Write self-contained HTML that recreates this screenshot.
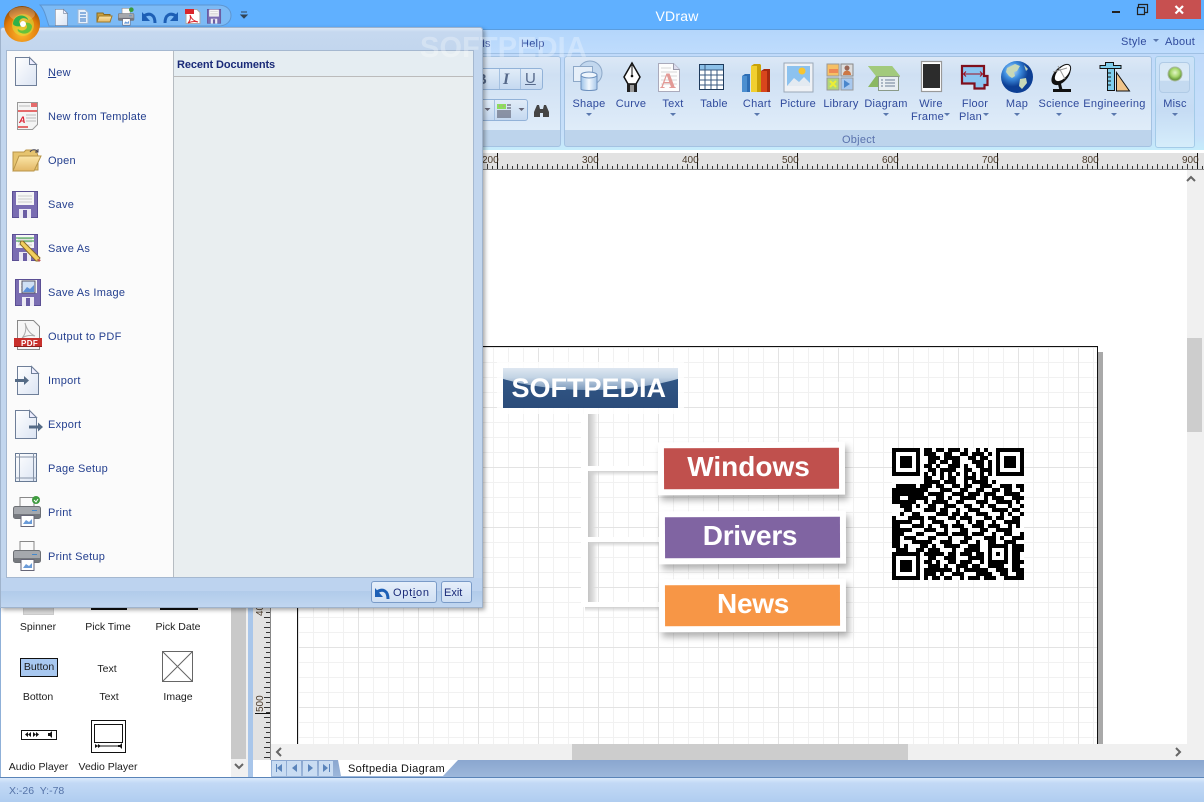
<!DOCTYPE html>
<html><head><meta charset="utf-8"><title>VDraw</title>
<style>
html,body{margin:0;padding:0;width:1204px;height:802px;overflow:hidden;background:#fff;font-family:"Liberation Sans",sans-serif}
div{position:absolute;box-sizing:border-box}
.t{position:absolute;white-space:nowrap;font-size:11px;line-height:14px;letter-spacing:.25px}
.c{transform:translateX(-50%)}
.r{color:#2f4a9c}
.m{color:#25408f;left:48px;letter-spacing:.25px}
.p{color:#1c1c1c;font-size:10.5px;letter-spacing:0}
svg{position:absolute;left:0;top:0;overflow:visible}
.rl{font:10px "Liberation Sans",sans-serif;fill:#4a3a2a}
</style></head><body>
<!-- title bar -->
<div style="left:0;top:0;width:1204px;height:30px;background:#60b0ff;border-bottom:1px solid #5a9ddf"></div>
<div class="t c" style="left:677px;top:8px;color:#fff;font-size:14px;line-height:17px;letter-spacing:.2px">VDraw</div>
<div style="left:1156px;top:0;width:45px;height:19px;background:#c75050"></div>
<svg width="1204" height="802" style="z-index:2">
<rect x="1112" y="11" width="8" height="2" fill="#222"/>
<path d="M1138.500 7.500v-3h9v8h-3M1137.500 7.500h7v7h-7z" fill="none" stroke="#222" stroke-width="1.200"/>
<path d="M1175.500 6l7.500 7.500M1183 6l-7.500 7.500" stroke="#fff" stroke-width="2.200"/>
</svg>
<!-- menu bar + ribbon -->
<div style="left:0;top:30px;width:1204px;height:24px;background:linear-gradient(#b4d6fb,#bfdcfd)"></div>
<div style="left:0;top:53px;width:1204px;height:97px;background:linear-gradient(#c0dafa,#c7e0fa 85%,#c5ecfb);border-top:1px solid #9fc0e4"></div>
<div class="t r" style="left:521px;top:37px">Help</div>
<div class="t r" style="left:476px;top:37px;">ols</div>
<div class="t r" style="left:1121px;top:35px">Style</div>
<div class="t r" style="left:1165px;top:35px">About</div>
<div style="left:300px;top:56px;width:261px;height:91px;border:1px solid #a4c2e2;border-radius:3px;background:linear-gradient(#dce8f6,#d2e2f4 16%,#cfe0f3 20%,#dfecf9 82%,#bdd4ec 82%,#bdd4ec)"></div>
<div style="left:564px;top:56px;width:588px;height:91px;border:1px solid #a4c2e2;border-radius:3px;background:linear-gradient(#dce8f6,#d2e2f4 16%,#cfe0f3 20%,#dfecf9 82%,#bdd4ec 82%,#bdd4ec)"></div>
<div style="left:1155px;top:56px;width:40px;height:92px;border:1px solid #a4cbe8;border-radius:3px;background:linear-gradient(#cbe2f8,#c6dcf4 60%,#d5edfb)"></div>
<div style="left:1159px;top:62px;width:31px;height:31px;border:1px solid #b0cbe6;border-radius:4px;background:linear-gradient(#d8e8f6,#dcebf8 60%,#c4daf0 62%,#c4daf0)"></div>
<div class="t" style="left:842px;top:133px;color:#5a72ad">Object</div>
<div style="left:470px;top:68px;width:73px;height:22px;border:1px solid #92b2d8;border-radius:3px;background:linear-gradient(#e1ecf8,#c5d9f0)"></div>
<div style="left:520px;top:69px;width:1px;height:20px;background:#a4c0e0"></div>
<div style="left:499px;top:69px;width:1px;height:20px;background:#a4c0e0"></div>
<div style="left:470px;top:99px;width:58px;height:22px;border:1px solid #92b2d8;border-radius:3px;background:linear-gradient(#e1ecf8,#c5d9f0)"></div>
<div style="left:494px;top:100px;width:1px;height:20px;background:#a4c0e0"></div>
<div class="t" style="left:476px;top:71px;color:#56698a;font-weight:bold;font-size:15px;line-height:17px;letter-spacing:0">B</div>
<div class="t" style="left:503px;top:71px;color:#56698a;font:bold italic 16px/17px 'Liberation Serif',serif;letter-spacing:0">I</div>
<div class="t" style="left:525px;top:70px;color:#56698a;font-size:15px;line-height:17px;letter-spacing:0;text-decoration:underline">U</div>
<!-- ruler top -->
<div style="left:0;top:153px;width:1187px;height:17px;background:#e2e2e2;border-bottom:1px solid #888"></div>
<div style="left:1187px;top:153px;width:17px;height:17px;background:#e2e2e2;border-bottom:1px solid #888"></div>
<svg width="1204" height="802">
<defs>
<pattern id="tk" x="397" y="153" width="10" height="17" patternUnits="userSpaceOnUse"><rect x="0" y="11" width="1" height="5" fill="#333"/><rect x="5" y="13" width="1" height="3" fill="#333"/></pattern>
<pattern id="tv" x="253" y="607" width="18" height="10" patternUnits="userSpaceOnUse"><rect x="11" y="0" width="6" height="1" fill="#333"/><rect x="13" y="5" width="4" height="1" fill="#333"/></pattern>
</defs>
<rect x="482" y="153" width="722" height="16" fill="url(#tk)"/>
<g fill="#111"><rect x="497" y="153" width="1" height="16"/><rect x="597" y="153" width="1" height="16"/><rect x="697" y="153" width="1" height="16"/><rect x="797" y="153" width="1" height="16"/><rect x="897" y="153" width="1" height="16"/><rect x="997" y="153" width="1" height="16"/><rect x="1097" y="153" width="1" height="16"/><rect x="1197" y="153" width="1" height="16"/></g>
<g class="rl"><text x="482" y="163">200</text><text x="582" y="163">300</text><text x="682" y="163">400</text><text x="782" y="163">500</text><text x="882" y="163">600</text><text x="982" y="163">700</text><text x="1082" y="163">800</text><text x="1182" y="163">900</text></g>
</svg>
<!-- right scrollbar -->
<div style="left:1187px;top:170px;width:17px;height:590px;background:#f0f0f0"></div>
<div style="left:1187px;top:338px;width:15px;height:94px;background:#cdcdcd"></div>
<!-- page -->
<div style="left:1098px;top:352px;width:5px;height:392px;background:#a9a9a9"></div>
<div style="left:297px;top:346px;width:801px;height:398px;border:1px solid #111;border-bottom:0;background-color:#fff;background-image:linear-gradient(#e3e3e3 1px,transparent 1px),linear-gradient(90deg,#e3e3e3 1px,transparent 1px),linear-gradient(#f1f1f1 1px,transparent 1px),linear-gradient(90deg,#f1f1f1 1px,transparent 1px);background-size:60px 60px,60px 60px,15px 15px,15px 15px;background-position:0 0"></div>
<!-- diagram -->
<div style="left:588px;top:414px;width:10px;height:190px;background:linear-gradient(90deg,#c4c4c4,#dcdcdc 50%,rgba(230,230,230,0))"></div>
<div style="left:589px;top:471px;width:70px;height:5px;background:linear-gradient(#cfcfcf,rgba(230,230,230,0))"></div>
<div style="left:589px;top:542px;width:70px;height:5px;background:linear-gradient(#cfcfcf,rgba(230,230,230,0))"></div>
<div style="left:585px;top:607px;width:74px;height:5px;background:linear-gradient(#cfcfcf,rgba(230,230,230,0))"></div>
<div style="left:581px;top:414px;width:7px;height:193px;background:#fff"></div>
<div style="left:587px;top:466px;width:73px;height:5px;background:#fff"></div>
<div style="left:587px;top:537px;width:73px;height:5px;background:#fff"></div>
<div style="left:581px;top:602px;width:79px;height:5px;background:#fff"></div>
<div style="left:497px;top:362px;width:187px;height:52px;background:rgba(255,255,255,.8)"></div>
<div style="left:503px;top:368px;width:175px;height:40px;overflow:hidden;background:linear-gradient(#335a8a,#2b4c7a)"><div style="left:-40px;top:-60px;width:255px;height:82px;border-radius:50%;background:linear-gradient(#e6edf5 70%,#c2d3e4 85%,#7d9abb)"></div></div>
<div class="t" style="left:511.500px;top:372px;color:#fff;font-weight:bold;font-size:27px;line-height:32px;letter-spacing:0">SOFTPEDIA</div>
<div style="left:658px;top:442px;width:187px;height:53px;background:#fff;box-shadow:3px 5px 7px rgba(0,0,0,.3);transform:rotate(-.2deg)"></div>
<div style="left:664px;top:448px;width:175px;height:41px;background:#c0504d;transform:rotate(-.2deg)"></div>
<div class="t c" style="left:748.500px;top:451px;color:#fff;font-weight:bold;font-size:28px;line-height:32px;letter-spacing:0">Windows</div>
<div style="left:659px;top:511px;width:187px;height:53px;background:#fff;box-shadow:3px 5px 7px rgba(0,0,0,.3);transform:rotate(-.2deg)"></div>
<div style="left:665px;top:517px;width:175px;height:41px;background:#8064a2;transform:rotate(-.2deg)"></div>
<div class="t c" style="left:750px;top:520px;color:#fff;font-weight:bold;font-size:28px;line-height:32px;letter-spacing:-.3px">Drivers</div>
<div style="left:659px;top:579px;width:187px;height:53px;background:#fff;box-shadow:3px 5px 7px rgba(0,0,0,.3);transform:rotate(-.2deg)"></div>
<div style="left:665px;top:585px;width:175px;height:41px;background:#f79646;transform:rotate(-.2deg)"></div>
<div class="t c" style="left:753px;top:588px;color:#fff;font-weight:bold;font-size:28px;line-height:32px;letter-spacing:-.3px">News</div>
<!-- QR -->
<svg width="132" height="132" viewBox="0 0 33 33" style="left:892px;top:448px;background:#fff;overflow:hidden" shape-rendering="crispEdges">
<path fill-rule="evenodd" d="M0 0h7v7h-7zM1 1v5h5v-5zM2 2h3v3h-3zM26 0h7v7h-7zM27 1v5h5v-5zM28 2h3v3h-3zM0 26h7v7h-7zM1 27v5h5v-5zM2 28h3v3h-3z"/>
<path fill="none" stroke="#000" d="M8 .5h2M11 .5h2M14 .5h3M18 .5h1M21 .5h1M23 .5h1M8 1.500h3M13 1.500h2M17 1.500h2M20 1.500h3M24 1.500h1M9 2.500h3M13 2.500h4M19 2.500h2M22 2.500h2M9 3.500h2M12 3.500h2M15 3.500h2M20 3.500h3M24 3.500h1M8 4.500h2M11 4.500h1M14 4.500h3M18 4.500h1M21 4.500h2M24 4.500h1M9 5.500h2M12 5.500h4M18 5.500h2M22 5.500h3M8 6.500h1M10 6.500h1M12 6.500h1M14 6.500h1M16 6.500h1M18 6.500h1M20 6.500h1M22 6.500h1M24 6.500h1M8 7.500h2M12 7.500h1M14 7.500h2M18 7.500h3M22 7.500h2M8 8.500h4M13 8.500h3M18 8.500h1M20 8.500h4M25 8.500h1M1 9.500h5M7 9.500h3M11 9.500h2M15 9.500h2M18 9.500h2M22 9.500h3M27 9.500h3M31 9.500h2M0 10.500h9M12 10.500h3M17 10.500h2M21 10.500h2M25 10.500h2M28 10.500h2M32 10.500h1M0 11.500h8M9 11.500h4M15 11.500h3M19 11.500h3M23 11.500h3M28 11.500h4M0 12.500h2M4 12.500h5M11 12.500h2M14 12.500h1M17 12.500h4M23 12.500h1M25 12.500h3M30 12.500h3M0 13.500h6M8 13.500h1M10 13.500h4M16 13.500h2M21 13.500h3M26 13.500h4M31 13.500h1M2 14.500h3M6 14.500h1M9 14.500h2M13 14.500h3M18 14.500h2M22 14.500h1M24 14.500h2M29 14.500h1M32 14.500h1M3 15.500h2M8 15.500h3M12 15.500h2M16 15.500h1M19 15.500h3M25 15.500h4M30 15.500h2M2 16.500h1M5 16.500h2M11 16.500h3M15 16.500h2M18 16.500h1M21 16.500h3M27 16.500h1M29 16.500h1M32 16.500h1M0 17.500h1M4 17.500h4M9 17.500h2M14 17.500h2M17 17.500h3M23 17.500h2M26 17.500h2M30 17.500h2M0 18.500h5M7 18.500h1M10 18.500h3M16 18.500h1M19 18.500h1M21 18.500h2M25 18.500h1M28 18.500h4M0 19.500h2M5 19.500h3M9 19.500h1M12 19.500h2M15 19.500h3M20 19.500h3M24 19.500h3M29 19.500h1M31 19.500h1M0 20.500h5M8 20.500h3M13 20.500h1M17 20.500h2M22 20.500h2M26 20.500h4M0 21.500h3M6 21.500h2M11 21.500h3M15 21.500h4M20 21.500h3M25 21.500h1M28 21.500h2M32 21.500h1M0 22.500h2M3 22.500h3M9 22.500h2M14 22.500h1M18 22.500h2M23 22.500h3M27 22.500h1M30 22.500h3M0 23.500h2M5 23.500h5M12 23.500h3M17 23.500h2M21 23.500h1M24 23.500h2M28 23.500h3M0 24.500h2M3 24.500h1M7 24.500h2M10 24.500h1M13 24.500h4M19 24.500h3M30 24.500h3M1 25.500h3M6 25.500h2M9 25.500h3M15 25.500h1M18 25.500h4M30 25.500h3M8 26.500h5M14 26.500h2M17 26.500h3M21 26.500h2M30 26.500h2M9 27.500h2M13 27.500h3M19 27.500h4M30 27.500h2M8 28.500h2M11 28.500h1M14 28.500h2M17 28.500h3M22 28.500h1M30 28.500h3M9 29.500h3M13 29.500h1M16 29.500h3M20 29.500h2M24 29.500h4M30 29.500h2M8 30.500h7M16 30.500h1M18 30.500h6M26 30.500h3M30 30.500h3M8 31.500h3M12 31.500h1M15 31.500h3M21 31.500h4M27 31.500h2M31 31.500h2M8 32.500h1M10 32.500h2M13 32.500h2M17 32.500h1M19 32.500h3M23 32.500h3M28 32.500h5"/>
<path fill-rule="evenodd" d="M24 24h5v5h-5zM25 25v3h3v-3zM26 26h1v1h-1z"/>
</svg>
<!-- left ruler & panel -->
<div style="left:248px;top:600px;width:5px;height:178px;background:#a9c6ea"></div>
<div style="left:253px;top:600px;width:18px;height:160px;background:#e2e2e2;border-right:1px solid #888"></div>
<svg width="1204" height="802"><rect x="253" y="607" width="18" height="153" fill="url(#tv)"/>
<rect x="255" y="607" width="15" height="1" fill="#111"/><rect x="255" y="713" width="15" height="1" fill="#111"/>
<text transform="translate(263,712) rotate(-90)" class="rl" fill="#222">500</text>
<text transform="translate(263,616) rotate(-90)" class="rl" fill="#222">40</text>
</svg>
<div style="left:0;top:600px;width:248px;height:178px;background:#fff;border-left:1px solid #8fb0d8"></div>
<div style="left:231px;top:600px;width:17px;height:177px;background:#f0f0f0"></div>
<div style="left:231px;top:600px;width:15px;height:159px;background:#c9c9c9"></div>
<div style="left:23px;top:607px;width:31px;height:8px;background:#d9d9d9;border:1px solid #ccc;border-top:0"></div>
<div style="left:91px;top:607px;width:36px;height:3px;background:#111"></div>
<div style="left:160px;top:607px;width:38px;height:3px;background:#111"></div>
<div class="t c p" style="left:38px;top:620px">Spinner</div>
<div class="t c p" style="left:108px;top:620px">Pick Time</div>
<div class="t c p" style="left:178px;top:620px">Pick Date</div>
<div class="t c p" style="left:39px;top:658px;width:38px;height:19px;background:#a8c8f0;border:1px solid #111;line-height:17px;text-align:center">Button</div>
<div class="t c p" style="left:107px;top:662px">Text</div>
<div class="t c p" style="left:38px;top:690px">Botton</div>
<div class="t c p" style="left:109px;top:690px">Text</div>
<div class="t c p" style="left:178px;top:690px">Image</div>
<div class="t c p" style="left:38.500px;top:760px">Audio Player</div>
<div class="t c p" style="left:108px;top:760px">Vedio Player</div>
<svg width="1204" height="802">
<path d="M162.500 651.500h30v30h-30zM163 652l29 29M192 652l-29 29" fill="#fff" stroke="#666"/>
<rect x="21.500" y="730.500" width="35" height="9" fill="#fff" stroke="#111"/>
<path d="M28 732v5l-3-2.500zM31 732v5l-3-2.500zM33 732v5l3-2.500zM36 732v5l3-2.500zM48 733h2l2-2v7l-2-2h-2z" fill="#111"/>
<rect x="91.500" y="720.500" width="34" height="32" fill="#fff" stroke="#111"/>
<rect x="94.500" y="724.500" width="28" height="18" fill="#fff" stroke="#111"/>
<path d="M96 746h22" stroke="#111"/><path d="M95 744v4l3-2zM98 744v4l3-2zM118 745h2l2-2v6l-2-2h-2z" fill="#111"/>
<path d="M235 764l4 4 4-4" fill="none" stroke="#666" stroke-width="2"/>
</svg>
<!-- scroll h + tabs -->
<div style="left:271px;top:744px;width:916px;height:16px;background:#f0f0f0"></div>
<div style="left:572px;top:744px;width:336px;height:16px;background:#cdcdcd"></div>
<div style="left:271px;top:760px;width:933px;height:17px;background:linear-gradient(#8aa6cf,#9db7db)"></div>
<div style="left:0;top:777px;width:1204px;height:25px;background:linear-gradient(#5a84b8 0,#5a84b8 1px,#dbeafc 1px,#c3d9f5 6px,#b0cdf0)"></div>
<div class="t" style="left:9px;top:784px;color:#5573a8;font-size:10.5px;letter-spacing:0">X:-26&nbsp; Y:-78</div>
<svg width="1204" height="802">
<g fill="#c9dcf2"><rect x="272" y="761" width="14" height="15"/><rect x="287" y="761" width="14" height="15"/><rect x="303" y="761" width="14" height="15"/><rect x="319" y="761" width="14" height="15"/></g>
<g fill="#5a84bb"><path d="M276 764v8h1v-8zM282 764v8l-5-4zM297 764v8l-5-4zM308 764v8l5-4zM323 764v8l5-4zM329 764v8h1v-8z"/></g>
<path d="M338 760H458L443 776H341z" fill="#fff"/>
<path d="M1187 181l4-4 4 4" fill="none" stroke="#666" stroke-width="2"/>
<path d="M281 748l-4 4 4 4" fill="none" stroke="#666" stroke-width="2"/>
<path d="M1176 748l4 4-4 4" fill="none" stroke="#666" stroke-width="2"/>
</svg>
<div class="t" style="left:348px;top:762px;color:#111;letter-spacing:.35px">Softpedia Diagram</div>
<!-- ribbon icons -->
<svg width="1204" height="802">
<defs>
<linearGradient id="gb" x1="0" x2="1"><stop offset="0" stop-color="#9cc2e8"/><stop offset=".5" stop-color="#f2f8fe"/><stop offset="1" stop-color="#a8c8ea"/></linearGradient>
<linearGradient id="gv" x1="0" y1="0" x2="0" y2="1"><stop offset="0" stop-color="#fff"/><stop offset="1" stop-color="#c4d3ea"/></linearGradient>
<radialGradient id="glb" cx=".35" cy=".3"><stop offset="0" stop-color="#cfe6fb"/><stop offset=".5" stop-color="#3e8ee0"/><stop offset="1" stop-color="#0d3f94"/></radialGradient>
<radialGradient id="gre" cx=".5" cy=".4"><stop offset="0" stop-color="#e2f5c8"/><stop offset=".6" stop-color="#a8d86e"/><stop offset="1" stop-color="#6c9e40"/></radialGradient>
</defs>
<!-- toolbar row 2 -->
<path d="M484.500 108l3 3 3-3zM518.500 108l3 3 3-3z" fill="#667"/>
<rect x="497" y="104" width="9" height="5" fill="#8ddc5e"/><path d="M499 106h1M503 106h1" stroke="#e060c0"/>
<path d="M507 105h4M507 108h4M497 111h14M497 113h14M497 115h14M497 117h14" stroke="#445"/>
<path d="M534 117v-5l3-7h2l1 4h3l1-4h2l3 7v5h-6v-4h-3v4z" fill="#444"/>
<!-- shape -->
<circle cx="590" cy="73" r="12" fill="#c2d7ee" stroke="#8da8c8"/>
<rect x="573.500" y="66.500" width="19" height="15" fill="#e6eff9" stroke="#8da8c8"/>
<path d="M581 75v14c0 2 16 2 16 0v-14z" fill="url(#gb)" stroke="#6d90bd"/>
<ellipse cx="589" cy="75" rx="8" ry="3" fill="#eef5fc" stroke="#6d90bd"/>
<!-- pen -->
<path d="M632 63l-8 14 4 7h8l4-7z" fill="#fff" stroke="#111" stroke-width="1.500"/>
<path d="M632 65v10" stroke="#111"/><circle cx="632" cy="76" r="1.300" fill="#111"/>
<rect x="627" y="84" width="10" height="8" fill="#222"/><rect x="630" y="85" width="4" height="7" fill="#999"/>
<!-- text doc -->
<path d="M658.500 63.500h15l6 6v22h-21z" fill="#fdfdfd" stroke="#aab"/>
<path d="M673.500 63.500v6h6" fill="#dde" stroke="#99a"/>
<path d="M661 68h10M661 72h16M661 76h16M661 80h16M661 84h16" stroke="#d8d8d8"/>
<text x="660" y="88" font-family="Liberation Serif" font-weight="bold" font-size="22" fill="#e39a96">A</text>
<!-- table -->
<rect x="699.500" y="64.500" width="24" height="25" fill="#fff" stroke="#1e3a5c" stroke-width="1"/>
<rect x="700" y="65" width="23" height="5" fill="#8cc0e8"/>
<path d="M700 70h23M700 75h23M700 80h23M700 85h23M705 65v24M711 70v19M717 70v19" stroke="#3a5a80" fill="none"/>
<!-- chart -->
<path d="M742 76l3-2h5v18h-8z" fill="#2e6eb5"/><rect x="742" y="76" width="5" height="16" fill="#4c8fd0"/>
<path d="M751 66l3-2h6l1 1v27h-10z" fill="#c9a208"/><rect x="751" y="66" width="6" height="26" fill="#f1cf2f"/>
<path d="M761 71l3-2h6v23h-9z" fill="#a52a10"/><rect x="761" y="71" width="6" height="21" fill="#d9461c"/>
<!-- picture -->
<rect x="784" y="63" width="29" height="29" fill="#eef1f5" stroke="#9aa8b8"/>
<rect x="787" y="66" width="23" height="20" fill="#8cc2ef"/>
<circle cx="802" cy="71" r="3.500" fill="#f7c531"/>
<path d="M787 86l7-8 5 4 5-5 6 6v3z" fill="#e3eaf1"/>
<!-- library -->
<rect x="827" y="64" width="12" height="12" fill="#f6c065" stroke="#999"/><rect x="829" y="69" width="9" height="4" fill="#e85"/>
<rect x="841" y="64" width="12" height="12" fill="#ddd" stroke="#888"/><circle cx="847" cy="68" r="2.500" fill="#965"/><path d="M843 75c0-6 8-6 8 0z" fill="#c74"/>
<rect x="827" y="78" width="12" height="12" fill="#b2d67a" stroke="#999"/><path d="M830 81l6 6M836 81l-6 6" stroke="#ee3" stroke-width="2"/>
<rect x="841" y="78" width="12" height="12" fill="#a8c8ee" stroke="#999"/><path d="M844 80v8l6-4z" fill="#4a86cc"/>
<!-- diagram -->
<path d="M868 66h24l8 10-8 11h-24l8-11z" fill="#8bb862"/><path d="M868 66h24l8 10h-24z" fill="#a2ca7c"/>
<rect x="878.500" y="76.500" width="20" height="14" fill="#e8eef2" stroke="#8a9a88"/>
<path d="M881 80h2M885 80h10M881 83h2M885 83h10M881 86h2M885 86h10" stroke="#6d7f96"/>
<!-- wire -->
<rect x="921.500" y="61.500" width="20" height="30" fill="#fff" stroke="#999" stroke-width="1.200"/>
<rect x="923" y="64" width="17" height="24" fill="#2c2c2c"/>
<!-- floor -->
<path d="M962 66h22v10h3.500v9h-3v3.500h-10v-5h-12.500z" fill="#8ac4f0" stroke="#7f0f1c" stroke-width="2.200"/>
<path d="M964 74h18M966 71.500l-2.500 2.500 2.500 2.500M980 71.500l2.500 2.500-2.500 2.500" fill="none" stroke="#a01020"/>
<!-- globe -->
<circle cx="1017" cy="77" r="16" fill="url(#glb)"/>
<path d="M1007 68l8-4 5 2-3 5-3 1 1 4-3 2-3-2-3-4zM1020 79l6-1 1 5-5 6-3-3zM1024 65l4 4-2 2z" fill="#c8d8b8"/>
<!-- science -->
<ellipse cx="1061" cy="75" rx="12" ry="7" transform="rotate(-48 1061 75)" fill="#111"/>
<ellipse cx="1062.500" cy="73" rx="10.500" ry="5.500" transform="rotate(-48 1062.500 73)" fill="#fff" stroke="#111"/>
<path d="M1058 66l7 13M1053 72l14-4" stroke="#999" fill="none"/>
<path d="M1059 82l2 8" stroke="#111" stroke-width="3"/>
<rect x="1053" y="89" width="18" height="3" fill="#111"/>
<!-- engineering -->
<path d="M1105.500 65.500v-3h8v3h7.500v3h-21v-3z" fill="#7fcdec" stroke="#111"/>
<rect x="1107.500" y="68.500" width="7" height="22" fill="#7fcdec" stroke="#111"/>
<path d="M1108 73h3M1108 77h3M1108 81h3M1108 85h3" stroke="#111"/>
<path d="M1116.500 72.500l13 18.500h-13z" fill="#f0c48a" stroke="#111"/>
<!-- misc -->
<circle cx="1175" cy="74" r="7" fill="url(#gre)" stroke="#a8b8a0"/>
<!-- arrows -->
<g fill="#5a78ae"><path d="M586 113h6l-3 3zM670 113h6l-3 3zM754 113h6l-3 3zM883 113h6l-3 3zM944 113h6l-3 3zM983 113h6l-3 3zM1014 113h6l-3 3zM1056 113h6l-3 3zM1111 113h6l-3 3zM1172 113h6l-3 3zM1153 39h6l-3 3z"/></g>
</svg>
<div class="t c r" style="left:589px;top:97px">Shape</div>
<div class="t c r" style="left:631px;top:97px">Curve</div>
<div class="t c r" style="left:673px;top:97px">Text</div>
<div class="t c r" style="left:714px;top:97px">Table</div>
<div class="t c r" style="left:757px;top:97px">Chart</div>
<div class="t c r" style="left:798px;top:97px">Picture</div>
<div class="t c r" style="left:841px;top:97px">Library</div>
<div class="t c r" style="left:886px;top:97px">Diagram</div>
<div class="t c r" style="left:931px;top:97px">Wire</div>
<div class="t r" style="left:911px;top:110px">Frame</div>
<div class="t c r" style="left:975px;top:97px">Floor</div>
<div class="t r" style="left:959px;top:110px">Plan</div>
<div class="t c r" style="left:1017px;top:97px">Map</div>
<div class="t c r" style="left:1059px;top:97px">Science</div>
<div class="t c r" style="left:1114.500px;top:97px;letter-spacing:.35px">Engineering</div>
<div class="t c r" style="left:1175px;top:97px">Misc</div>
<!-- menu -->
<div style="left:0;top:27px;width:483px;height:581px;border:1px solid #9fb3cc;border-radius:3px 3px 0 0;background:linear-gradient(#dbe7f6 0,#c6d8ef 4px,#c2d6ee 24px);box-shadow:2px 2px 4px rgba(0,0,0,.35)"></div>
<div style="left:1px;top:578px;width:481px;height:29px;background:linear-gradient(#bdd3ef,#bdd3ef 45%,#b1cbea 45%,#c0d6f0)"></div>
<div style="left:6px;top:50px;width:468px;height:528px;border:1px solid #a5b8d0;background:#e9eef0"></div>
<div style="left:7px;top:51px;width:167px;height:526px;background:#fbfbfb;border-right:1px solid #b6bcc2"></div>
<div style="left:174px;top:51px;width:299px;height:26px;background:#e5edf2;border-bottom:1px solid #bbb"></div>
<div class="t" style="left:177px;top:58px;color:#1a2a78;font-weight:bold;font-size:11px;letter-spacing:-.1px">Recent Documents</div>
<div class="t m" style="top:66px"><u>N</u>ew</div>
<div class="t m" style="top:110px">New from Template</div>
<div class="t m" style="top:154px">Open</div>
<div class="t m" style="top:198px">Save</div>
<div class="t m" style="top:242px">Save As</div>
<div class="t m" style="top:286px">Save As Image</div>
<div class="t m" style="top:330px">Output to PDF</div>
<div class="t m" style="top:374px">Import</div>
<div class="t m" style="top:418px">Export</div>
<div class="t m" style="top:462px">Page Setup</div>
<div class="t m" style="top:506px">Print</div>
<div class="t m" style="top:550px">Print Setup</div>
<div style="left:371px;top:581px;width:66px;height:22px;border:1px solid #7a9bc8;border-radius:3px;background:linear-gradient(#e6effa,#cfdff3)"></div>
<div style="left:441px;top:581px;width:31px;height:22px;border:1px solid #7a9bc8;border-radius:3px;background:linear-gradient(#e6effa,#cfdff3)"></div>
<div class="t" style="left:393px;top:586px;color:#1a2a78;letter-spacing:.7px">Opt<u>i</u>on</div>
<div class="t" style="left:444px;top:586px;color:#1a2a78;letter-spacing:0">Exit</div>
<div class="t" style="left:420px;top:32px;color:rgba(255,255,255,.28);font-weight:bold;font-size:29px;line-height:32px;letter-spacing:.1px">SOFTPEDIA</div>
<svg width="1204" height="802">
<defs>
<linearGradient id="dg" x1="0" y1="0" x2="1" y2="1"><stop offset="0" stop-color="#fff"/><stop offset="1" stop-color="#dbe4f3"/></linearGradient>
<linearGradient id="fld" x1="0" y1="0" x2="0" y2="1"><stop offset="0" stop-color="#fbe6a8"/><stop offset="1" stop-color="#e3b766"/></linearGradient>
<g id="doc"><path d="M.5.500h14l7 7v21H.5z" fill="url(#dg)" stroke="#6f7f99"/><path d="M14.500.500v7h7z" fill="#eef" stroke="#6f7f99"/></g>
<g id="fl"><rect x=".5" y=".5" width="25" height="26" fill="#7a6db2" stroke="#5b4f94"/><rect x="4" y="1" width="18" height="13" fill="#f6f6f6"/><path d="M6 5h14M6 8h14M6 11h14" stroke="#ccc"/><rect x="7" y="18" width="12" height="9" fill="#eceaf4"/><rect x="11" y="19" width="4" height="8" fill="#6a5da4"/></g>
<g id="prn"><rect x="7" y=".5" width="14" height="11" fill="#fafafa" stroke="#888"/><rect x=".5" y="9.500" width="27" height="12" rx="2" fill="#a5a8ad" stroke="#6d7075"/><rect x="1" y="17" width="26" height="4" fill="#76797e"/><rect x="19" y="13" width="5" height="1" fill="#4488cc"/><rect x="8" y="18.500" width="13" height="11" fill="#fff" stroke="#667"/><path d="M10 27l3-4 3 2 3-3v5z" fill="#6a9bd8"/></g>
<g id="und"><path d="M155 23c0-8-5-11-11-7" fill="none" stroke="#1d5fb5" stroke-width="3"/><path d="M142 12v9h8z" fill="#1d5fb5"/></g>
</defs>
<!-- QAT -->
<path d="M40 5H218c9 0 13 5 13 10.500s-4 10.500-13 10.500H49c-3-8-4-16-9-21z" fill="#7cbaf5" stroke="#5d95d0"/>
<use href="#doc" transform="translate(55,9) scale(.58)"/>
<path d="M78 9.500h7l3 3v11H78z" fill="#e8f1fb" stroke="#9cb8d8"/><path d="M80 13h6M80 16h6M80 19h6M80 21h6" stroke="#2a6fc0"/>
<path d="M97 22V13h6l1 1.500h6V22z" fill="#c8a040" stroke="#8a6a20"/><path d="M97 22l2-6h13l-2 6z" fill="url(#fld)" stroke="#a07a28"/>
<g transform="translate(118,8) scale(.58)"><use href="#prn"/><circle cx="23" cy="3" r="4" fill="#3a9a3a"/></g>
<use href="#und"/>
<use href="#und" transform="matrix(-1 0 0 1 320 0)"/>
<path d="M186 9.500h11l3 3v11h-14z" fill="#fff" stroke="#aaa"/><rect x="185" y="9" width="9" height="5" fill="#d8262c"/><path d="M190 15c1 3 3 6 8 7-4-1-8 0-10 1 2-2 3-5 2-8z" fill="none" stroke="#d8262c"/>
<use href="#fl" transform="translate(207,9) scale(.54)"/>
<path d="M241 12h6M241 15h6l-3 3z" fill="#345" stroke="#345"/>
<!-- orb -->
<radialGradient id="orb" cx=".5" cy=".75" r=".8"><stop offset="0" stop-color="#ffb92f"/><stop offset=".6" stop-color="#e07a0a"/><stop offset="1" stop-color="#7a3c00"/></radialGradient>
<circle cx="22" cy="24" r="18" fill="url(#orb)"/>
<ellipse cx="22" cy="14" rx="13" ry="7" fill="#fff" opacity=".22"/>
<circle cx="23" cy="25" r="11" fill="#d9e83a" opacity=".5"/>
<path d="M13 24c0-6 6-10 11-8 3 1 5 4 4 4-2-2-6-3-8 0-2 2 0 5 3 6-6 1-9 0-10-2z" fill="#2fb14a"/>
<path d="M32 26c0 6-6 9-11 7-3-1-4-3-3-4 2 2 6 2 8 0 2-2 1-5-2-6 4-1 7 0 8 3z" fill="#67c23a"/>
<circle cx="23" cy="24" r="3" fill="#fff"/>
<!-- menu icons -->
<use href="#doc" transform="translate(15,57)"/>
<g transform="translate(17,102)"><path d="M.5.500h20v22l-5 5H.5z" fill="#f4f4f4" stroke="#999"/><rect x="1" y="8" width="19" height="2" fill="#e56b6b"/><rect x="14" y="1" width="6" height="4" fill="#e56b6b"/><path d="M2 4h11M9 13h10M9 16h10M9 19h10" stroke="#bbb"/><rect x="1" y="24" width="10" height="2" fill="#e56b6b"/><text x="2" y="21" font-size="9" font-weight="bold" font-style="italic" fill="#d23">A</text></g>
<g transform="translate(12,147)"><path d="M1 23V5h11l2-2h10l2 6v14z" fill="#e6c46f" stroke="#b89548"/><path d="M1 24l6-15h22l-7 15z" fill="url(#fld)" stroke="#b89548"/><path d="M18 5c2-3 6-3 8 0M26 2v3h-3" fill="none" stroke="#445"/></g>
<use href="#fl" transform="translate(12,191)"/>
<use href="#fl" transform="translate(12,234)"/>
<path d="M16 238h18M16 241h18" stroke="#2c9a3a"/>
<path d="M21 241l2 0 17 17-2 3-2 0-16-17z" fill="#f2cf5d" stroke="#886a2a"/><path d="M37 259l4 1-2 2z" fill="#c05050"/>
<use href="#fl" transform="translate(15,279)"/>
<rect x="22" y="281" width="13" height="12" fill="#cfe0f4" stroke="#556"/><path d="M23 292l4-5 3 2 4-4v7z" fill="#5b8fd8"/>
<g transform="translate(17,320)"><path d="M.5.500h16l6 6v23H.5z" fill="#f6f6f6" stroke="#888"/><path d="M8 3c2 7 5 11 10 13-5-1-10 0-13 2 3-3 5-9 3-15z" fill="none" stroke="#aaa"/></g>
<rect x="14" y="338" width="28" height="9" fill="#c8302c"/><path d="M14 347h28v-1H14z" fill="#8c1d1a"/>
<text x="21" y="346" font-size="8" font-weight="bold" fill="#fff" letter-spacing=".4">PDF</text>
<use href="#doc" transform="translate(17,366)"/>
<path d="M15 379h9v-3l5 4.500-5 4.500v-3h-9z" fill="#556b86"/>
<use href="#doc" transform="translate(15,410)"/>
<path d="M29 425.500h9v-3l5 4.500-5 4.500v-3h-9z" fill="#556b86"/>
<rect x="15.500" y="453.500" width="21" height="28" fill="url(#dg)" stroke="#687a94"/><path d="M15 457h22M15 478h22M19.500 453v28M33.500 453v28" stroke="#8794a8" fill="none"/>
<use href="#prn" transform="translate(13,497)"/><circle cx="36" cy="500" r="4" fill="#3f9c3f"/><path d="M34 500l2 2 2-3" stroke="#fff" fill="none"/>
<use href="#prn" transform="translate(13,541)"/>
<use href="#und" transform="translate(233,576)"/>
</svg>
</body></html>
